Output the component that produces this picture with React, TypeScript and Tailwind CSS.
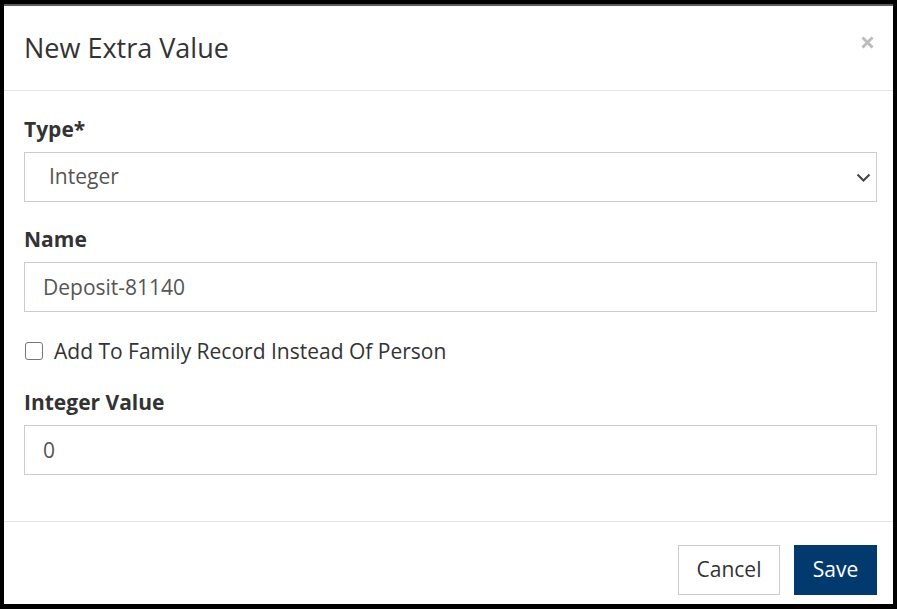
import { useState } from "react";

export default function App() {
  const [family, setFamily] = useState(false);

  const labelCls = "block text-[21px] leading-[22px] font-bold text-[#333] mb-[12px]";
  const inputCls =
    "w-full h-[50px] border border-[#ccc] bg-white pl-[18px] pr-3 text-[21px] text-[#555] outline-none";

  return (
    <div
      className="w-[897px] h-[609px] bg-black flex flex-col pl-[4px] pr-[4px] pb-[5px] overflow-hidden"
      style={{ fontFamily: '"Open Sans", "Liberation Sans", sans-serif' }}
    >
      {/* backdrop page peeking above the modal */}
      <div className="h-[4px] shrink-0 bg-black" />
      <div className="h-[2px] shrink-0 bg-[#5c5c5c]" />

      <div className="flex-1 bg-white flex flex-col">
        <div className="h-[85px] shrink-0 flex items-center justify-between pl-[20px] pr-[18px] border-b border-[#e5e5e5]">
          <h4 className="text-[27px] text-[#333] leading-none -mt-[1px]">New Extra Value</h4>
          <button className="w-[16px] h-[16px] -mt-[12px] flex items-center justify-center" aria-label="Close">
            <svg width="13" height="13" viewBox="0 0 13 13">
              <path d="M1.5 1.5 L11.5 11.5 M11.5 1.5 L1.5 11.5" stroke="#bdbdbd" strokeWidth="3" />
            </svg>
          </button>
        </div>

        <div className="pt-[27px] pl-[20px] pr-[16px] pb-[20px] border-b border-[#e5e5e5]">
          <div className="mb-[26px]">
            <label className={labelCls}>Type*</label>
            <div className="relative">
              <select className={`${inputCls} appearance-none pl-[24px]`} defaultValue="Integer">
                <option>Integer</option>
                <option>Text</option>
                <option>Date</option>
                <option>Bit</option>
              </select>
              <svg
                className="absolute right-[6px] top-[21px] pointer-events-none"
                width="15"
                height="9"
                viewBox="0 0 15 9"
              >
                <path d="M1.5 1.5 L7.5 7.5 L13.5 1.5" fill="none" stroke="#444" strokeWidth="2" />
              </svg>
            </div>
          </div>

          <div className="mb-[25px]">
            <label className={labelCls}>Name</label>
            <input className={inputCls} defaultValue="Deposit-81140" />
          </div>

          <label className="flex items-center gap-[11px] mb-[26px] text-[21px] leading-[28px] text-[#333]">
            <input
              type="checkbox"
              checked={family}
              onChange={(e) => setFamily(e.target.checked)}
              className="appearance-none w-[18px] h-[18px] ml-[1px] border border-[#767676] rounded-[3px] bg-white"
            />
            Add To Family Record Instead Of Person
          </label>

          <div className="mb-[26px]">
            <label className={labelCls}>Integer Value</label>
            <input className={inputCls} defaultValue="0" />
          </div>
        </div>

        <div className="flex justify-end gap-[14px] pt-[23px] pr-[16px]">
          <button className="h-[50px] w-[102px] border border-[#ccc] bg-white text-[21px] text-[#333]">
            Cancel
          </button>
          <button className="h-[50px] w-[83px] bg-[#033a6e] text-[21px] text-white">Save</button>
        </div>
      </div>
    </div>
  );
}
